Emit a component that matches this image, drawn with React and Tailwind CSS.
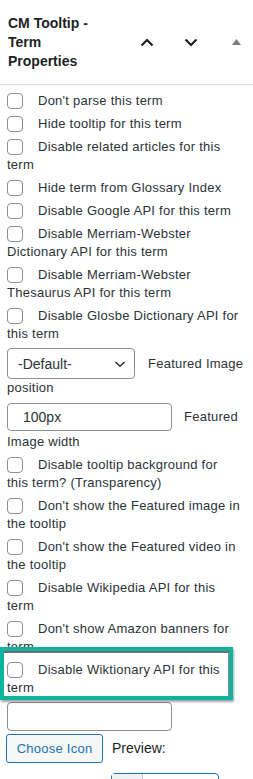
import React from 'react';

const font = { fontFamily: '"Liberation Sans", Arial, sans-serif' };

function Box() {
  return (
    <span className="inline-block w-4 h-4 align-middle -mt-[2px] mr-[15px] rounded-[4px] border border-[#8c8f94] bg-white" />
  );
}

function Row({ children }) {
  return (
    <div className="mb-[5px] leading-[18px]">
      <Box />
      {children}
    </div>
  );
}

function ChevronUp() {
  return (
    <svg width="14" height="9" viewBox="0 0 14 9" fill="none">
      <path d="M1.5 7.5L7 2l5.5 5.5" stroke="#1d2327" strokeWidth="2.2" />
    </svg>
  );
}

function ChevronDown() {
  return (
    <svg width="14" height="9" viewBox="0 0 14 9" fill="none">
      <path d="M1.5 1.5L7 7l5.5-5.5" stroke="#1d2327" strokeWidth="2.2" />
    </svg>
  );
}

export default function App() {
  const rows = [
    "Don't parse this term",
    'Hide tooltip for this term',
    'Disable related articles for this term',
    'Hide term from Glossary Index',
    'Disable Google API for this term',
    'Disable Merriam-Webster Dictionary API for this term',
    'Disable Merriam-Webster Thesaurus API for this term',
    'Disable Glosbe Dictionary API for this term',
  ];
  const rows2 = [
    'Disable tooltip background for this term? (Transparency)',
    "Don't show the Featured image in the tooltip",
    "Don't show the Featured video in the tooltip",
    'Disable Wikipedia API for this term',
    "Don't show Amazon banners for term",
  ];

  return (
    <div className="w-[253px] h-[779px] overflow-hidden bg-white text-[13px] tracking-[0.25px] text-[#2c3338]" style={font}>
      {/* header */}
      <div className="flex items-center h-[85px] border-b border-[#dcdcde]">
        <div className="w-[125px] pl-[8px]">
          <h2 className="max-w-[100px] text-[14px] leading-[19px] font-semibold tracking-normal text-[#1d2327]">
            CM Tooltip - Term Properties
          </h2>
        </div>
        <button className="w-[44px] h-[36px] flex items-center justify-center">
          <ChevronUp />
        </button>
        <button className="w-[44px] h-[36px] flex items-center justify-center">
          <ChevronDown />
        </button>
        <button className="w-[40px] h-[36px] flex items-center justify-center pl-[6px]">
          <svg width="9" height="6" viewBox="0 0 9 6">
            <path d="M4.5 0L9 6H0z" fill="#787c82" />
          </svg>
        </button>
      </div>

      <div className="pl-[7px] pr-[12px] pt-[7px]">
        {rows.map((r) => (
          <Row key={r}>{r}</Row>
        ))}

        <div className="leading-[18px] mb-[6px]">
          <div className="flex items-center">
            <div className="flex items-center justify-between shrink-0 w-[128px] h-[31px] mr-[13px] pl-[10px] pr-[8px] border border-[#8c8f94] rounded-[4px] text-[14px] tracking-normal text-[#2c3338]">
              <span>-Default-</span>
              <svg width="12" height="8" viewBox="0 0 12 8" fill="none">
                <path d="M1.5 2L6 6.3 10.5 2" stroke="#2c3338" strokeWidth="1.5" />
              </svg>
            </div>
            <span className="whitespace-nowrap">Featured Image</span>
          </div>
          <div>position</div>
        </div>

        <div className="leading-[18px] mb-[5px]">
          <div className="flex items-center">
            <div className="flex items-center shrink-0 w-[165px] h-[28px] mr-[12px] pl-[15px] border border-[#8c8f94] rounded-[4px] text-[14px] tracking-normal text-[#2c3338]">
              <span>100px</span>
            </div>
            <span className="whitespace-nowrap">Featured</span>
          </div>
          <div className="pt-[2px]">Image width</div>
        </div>

        {rows2.map((r) => (
          <Row key={r}>{r}</Row>
        ))}

        <div className="relative mb-[5px] leading-[18px]">
          <div className="absolute top-[-14px] bottom-[-3px] left-[-7px] right-[8px] bg-white border-[4px] border-[#10b39e] shadow-[inset_0_2px_0_#6f6f6f,inset_-1px_0_0_#8a8a8a,1px_2px_2px_rgba(0,0,0,0.35)]" />
          <div className="relative">
            <Box />
            Disable Wiktionary API for this term
          </div>
        </div>

        <div className="w-[165px] h-[29px] border border-[#8c8f94] rounded-[4px] bg-white" />

        <div className="flex items-center mt-[3px] -ml-[1px]">
          <button className="h-[29px] w-[97px] border border-[#2271b1] rounded-[3px] bg-[#f6f7f7] text-[#2271b1] text-[13px]">
            Choose Icon
          </button>
          <span className="ml-[9px] text-[14px] tracking-normal text-[#1d2327]">Preview:</span>
        </div>

        <div className="flex items-start mt-[10px]">
          <span className="w-[104px] pt-[4px] text-[13px] leading-[18px] text-[#2c3338]">Select icon size:</span>
          <div className="flex w-[108px] h-[30px] border border-[#2271b1] rounded-t-[4px]">
            <div className="w-[31px] bg-[#f0f0f1] border-r border-[#c3c4c7]" />
          </div>
        </div>
      </div>
    </div>
  );
}
